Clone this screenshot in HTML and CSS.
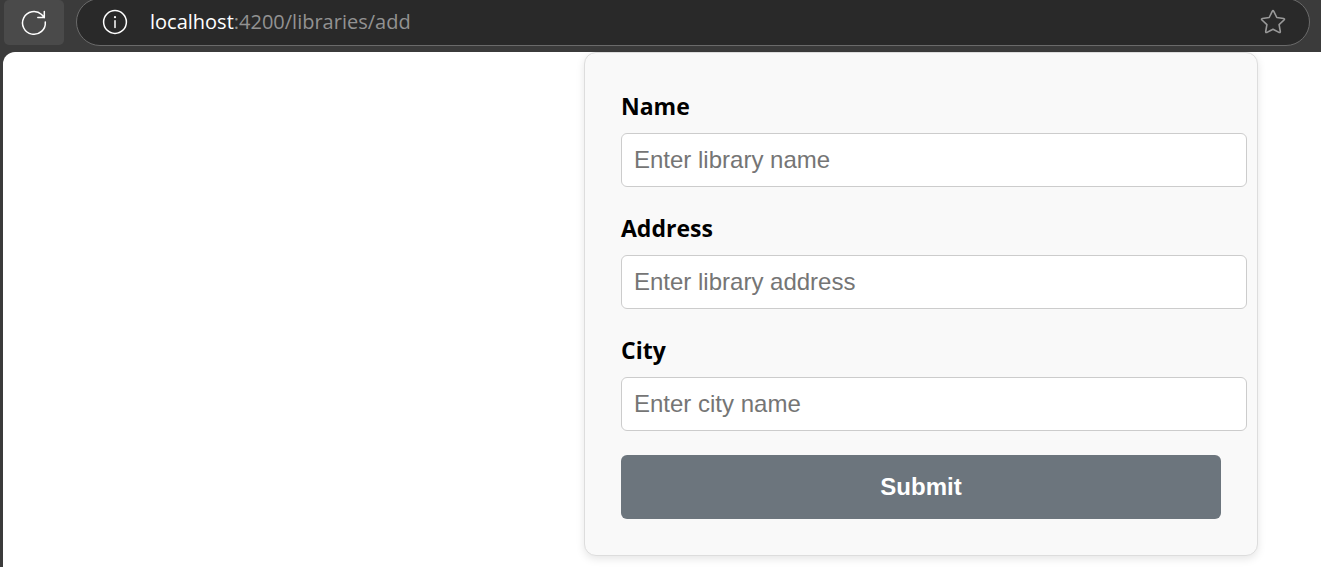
FILE: index.html
```html
<!DOCTYPE html>
<html lang="en">
<head>
<meta charset="utf-8">
<meta name="viewport" content="width=device-width, initial-scale=1">
<title>Add library</title>
<link rel="stylesheet" href="styles.css">
</head>
<body>
<header class="toolbar">
  <button class="reload" type="button" aria-label="Reload">
    <svg width="28" height="28" viewBox="0 0 28 28" fill="none" stroke="#fff" stroke-width="1.5" stroke-linecap="round" stroke-linejoin="round">
      <path d="M25.3 13A11.4 11.4 0 1 1 21.6 5.5L24.3 8.6M24.3 2.4V8.6H17.8"/>
    </svg>
  </button>
  <div class="address-bar">
    <button class="bar-button" type="button" aria-label="Site information">
      <svg width="26" height="26" viewBox="0 0 26 26" fill="none" stroke="#fff" stroke-width="1.5" stroke-linecap="round">
        <circle cx="13" cy="13" r="11.4"/>
        <path d="M13 11.7V18.5"/>
        <circle cx="13" cy="8.2" r="1.1" fill="#fff" stroke="none"/>
      </svg>
    </button>
    <div class="url"><span class="host">localhost</span>:4200/libraries/add</div>
    <button class="bar-button" type="button" aria-label="Add to favorites">
      <svg width="26" height="26" viewBox="0 0 26 26" fill="none" stroke="#999" stroke-width="1.6" stroke-linejoin="round">
        <path d="M12.2 2.3Q13 .9 13.8 2.3L16.8 8.5L23.6 9.5Q25.1 9.8 24 11L19.1 15.7L20.3 22.5Q20.4 24 19 23.4L13 20.2L7 23.4Q5.6 24 5.7 22.5L6.9 15.7L2 11Q.9 9.8 2.4 9.5L9.2 8.5Z"/>
      </svg>
    </button>
  </div>
</header>
<main class="page">
  <form class="card">
    <div class="field">
      <label for="name">Name</label>
      <input id="name" type="text" placeholder="Enter library name">
    </div>
    <div class="field">
      <label for="address">Address</label>
      <input id="address" type="text" placeholder="Enter library address">
    </div>
    <div class="field">
      <label for="city">City</label>
      <input id="city" type="text" placeholder="Enter city name">
    </div>
    <button class="submit" type="submit">Submit</button>
  </form>
</main>
</body>
</html>
```

FILE: styles.css
```css
* {
  box-sizing: border-box;
}

body {
  margin: 0;
  min-height: 100vh;
  display: flex;
  flex-direction: column;
  background: #3b3b3b;
  font-family: "Open Sans", "Noto Sans", sans-serif;
  overflow-x: hidden;
}

.toolbar {
  display: flex;
  gap: 12px;
  height: 52px;
  padding: 0 11px 0 4px;
}

.reload {
  display: flex;
  align-items: center;
  justify-content: center;
  width: 60px;
  height: 45px;
  padding: 0;
  border: 0;
  border-radius: 5px;
  background: #4a4a4a;
}

.address-bar {
  flex: 1;
  display: flex;
  align-items: center;
  gap: 22px;
  height: 48px;
  margin-top: -2px;
  padding: 0 23px 0 25px;
  border: 1px solid #6a6a6a;
  border-radius: 24px;
  background: #292929;
}

.bar-button {
  display: flex;
  padding: 0;
  border: 0;
  background: none;
}

.url {
  flex: 1;
  color: #929292;
  font-size: 20px;
  line-height: 28px;
}

.host {
  color: #fff;
}

.page {
  flex: 1;
  display: flex;
  align-items: flex-start;
  justify-content: flex-end;
  margin-left: 3px;
  padding: 0 63px 11px 0;
  border-top-left-radius: 12px;
  background: #fff;
}

.card {
  display: flex;
  flex-direction: column;
  gap: 24px;
  width: 100%;
  max-width: 674px;
  padding: 36px;
  border: 1px solid #ddd;
  border-radius: 12px;
  background: #f9f9f9;
  box-shadow: 0 3px 8px rgba(0, 0, 0, 0.1);
}

.field label {
  display: block;
  margin-bottom: 10px;
  color: #000;
  font-size: 23px;
  font-weight: 700;
  line-height: 34px;
}

/* The text boxes keep content-box sizing, so they run past the button. */
.field input {
  display: block;
  box-sizing: content-box;
  width: 100%;
  height: 28px;
  padding: 12px;
  border: 1px solid #ccc;
  border-radius: 6px;
  background: #fff;
  font-family: "Liberation Sans", Arial, sans-serif;
  font-size: 24px;
}

.field input::placeholder {
  color: #757575;
}

.submit {
  height: 64px;
  border: 0;
  border-radius: 6px;
  background: #6c757d;
  color: #fff;
  font-family: "Liberation Sans", Arial, sans-serif;
  font-size: 24px;
  font-weight: 700;
}
```
